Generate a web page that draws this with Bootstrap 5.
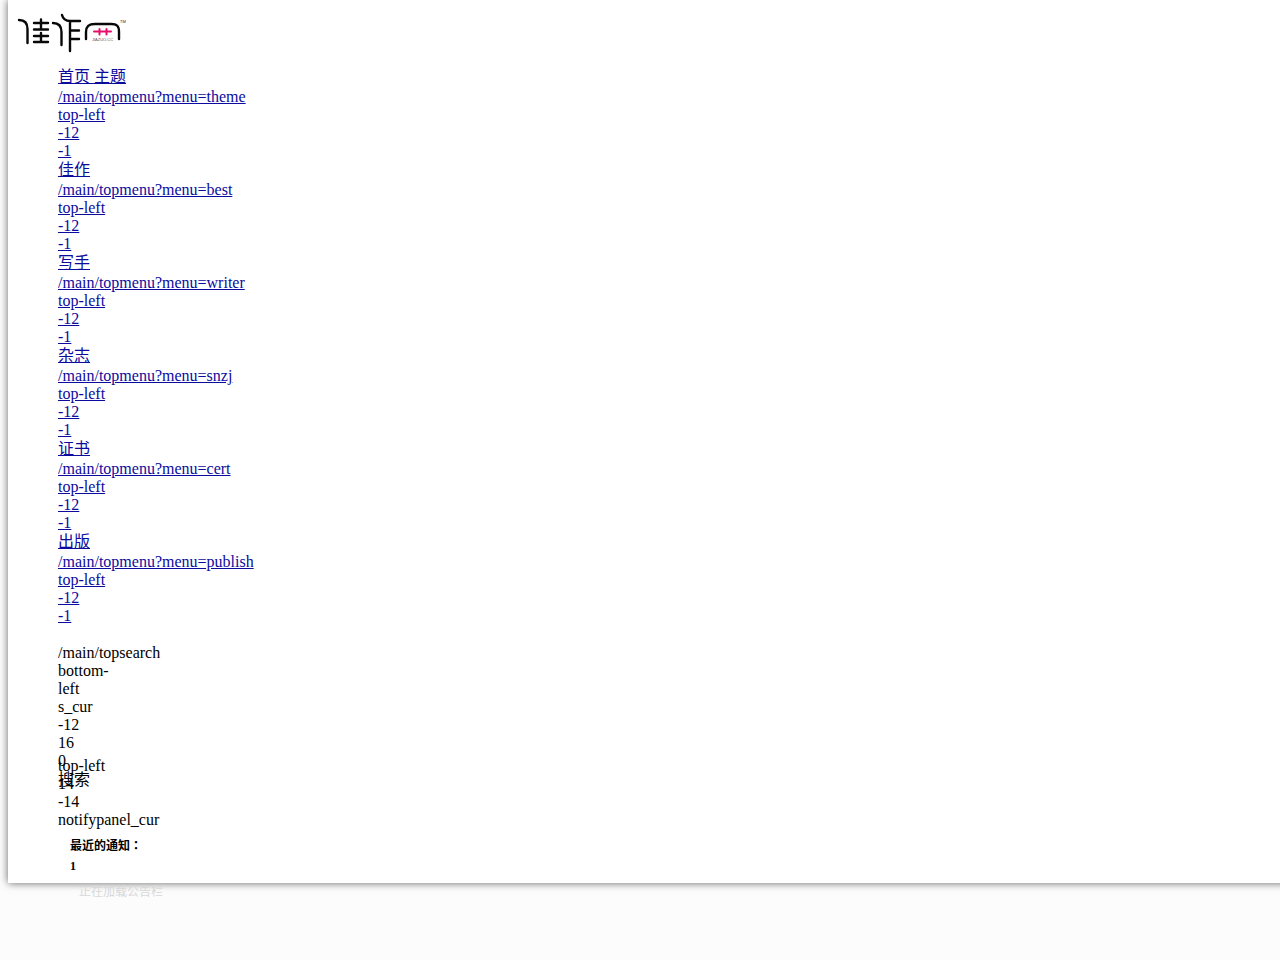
<!DOCTYPE html>
<html lang="zh-CN">
<head>
<meta charset="utf-8">
<meta name="viewport" content="width=device-width, initial-scale=1">
<title>佳作网</title>
<link href="https://cdn.jsdelivr.net/npm/bootstrap@5.3.0/dist/css/bootstrap.min.css" rel="stylesheet">
<style>
body { background: #fcfcfc; color: #000; font: 16px/18px "Liberation Serif", "Noto Sans CJK SC", serif; }
.panel { box-shadow: 0 0 8px rgba(0,0,0,.6); margin: 0 -12px 0 8px; padding: 12px 0 7px 50px; }
.logo { display: block; width: 110px; height: 42px; margin-left: -41px; }
.topmenu { margin-top: 13px; }
.topmenu a { color: #0b0b9e; }
.zh { line-height: 19px; padding-bottom: 2px; }
/* option values spill out of the narrow search cell */
.search { width: 50px; height: 113px; margin-top: 19px; }
.notice { font-size: 12px; line-height: 20px; padding: 7px 0 0 12px; }
.colon { font-family: "Noto Sans CJK TC", sans-serif; line-height: 1; }
.loading { height: 0; padding-left: 21px; font-size: 12px; color: #d8d8d8; }
.loading p { padding-top: 7px; }
</style>
</head>
<body class="min-vh-100 overflow-x-hidden">
<main class="panel bg-white">
  <a href="#" aria-label="佳作网" class="d-inline-block align-top">
    <svg class="logo" viewBox="0 0 110 42" fill="none" stroke="#080808" stroke-width="2.4" stroke-linecap="round">
      <path d="M2 8C8 8 10.500 11 10.500 17V31M17 11H31M17 17.500H31M17 24H31M17 30H31M24 7.500V17M24 21V30M36 11C42 11 44.500 14 44.500 20V33M45 3C46 7 49 9 53 9H63M53 9V39M54 18.500H62M54 27H62M69 27V20C69 14 72 12 78 12H94C100 12 102 14 102 20V27"/>
      <path d="M77 19.500H94M82.500 17V22.500M89.500 17V22.500" stroke="#e5106d" stroke-width="2"/>
      <text x="75" y="29" font-family="Liberation Sans, sans-serif" font-size="4" fill="#555" stroke="none">JIAZUO.CC</text>
      <text x="103" y="11" font-family="Liberation Sans, sans-serif" font-size="4" fill="#222" stroke="none">TM</text>
    </svg>
  </a>
  <nav class="topmenu">
    <div class="zh"><a href="#">首页 主题</a></div>
    <div><a href="#">/main/topmenu?menu=theme<br>top-left<br>-12<br>-1</a></div>
    <div class="zh"><a href="#">佳作</a></div>
    <div><a href="#">/main/topmenu?menu=best<br>top-left<br>-12<br>-1</a></div>
    <div class="zh"><a href="#">写手</a></div>
    <div><a href="#">/main/topmenu?menu=writer<br>top-left<br>-12<br>-1</a></div>
    <div class="zh"><a href="#">杂志</a></div>
    <div><a href="#">/main/topmenu?menu=snzj<br>top-left<br>-12<br>-1</a></div>
    <div class="zh"><a href="#">证书</a></div>
    <div><a href="#">/main/topmenu?menu=cert<br>top-left<br>-12<br>-1</a></div>
    <div class="zh"><a href="#">出版</a></div>
    <div><a href="#">/main/topmenu?menu=publish<br>top-left<br>-12<br>-1</a></div>
  </nav>
  <div class="search">
    <div>/main/topsearch</div><div>bottom-left</div><div>s_cur</div><div>-12</div><div>16</div><div>0</div>
    <div class="zh text-nowrap">搜索</div>
  </div>
  <div>
    <div>top-left</div><div>14</div><div>-14</div><div>notifypanel_cur</div>
  </div>
  <div class="notice fw-bold"><div>最近的通知<span class="colon" lang="zh-TW">：</span></div><div>1</div></div>
  <div class="loading text-nowrap"><p class="m-0">正在加载公告栏</p></div>
</main>
<script src="https://cdn.jsdelivr.net/npm/bootstrap@5.3.0/dist/js/bootstrap.bundle.min.js"></script>
</body>
</html>
